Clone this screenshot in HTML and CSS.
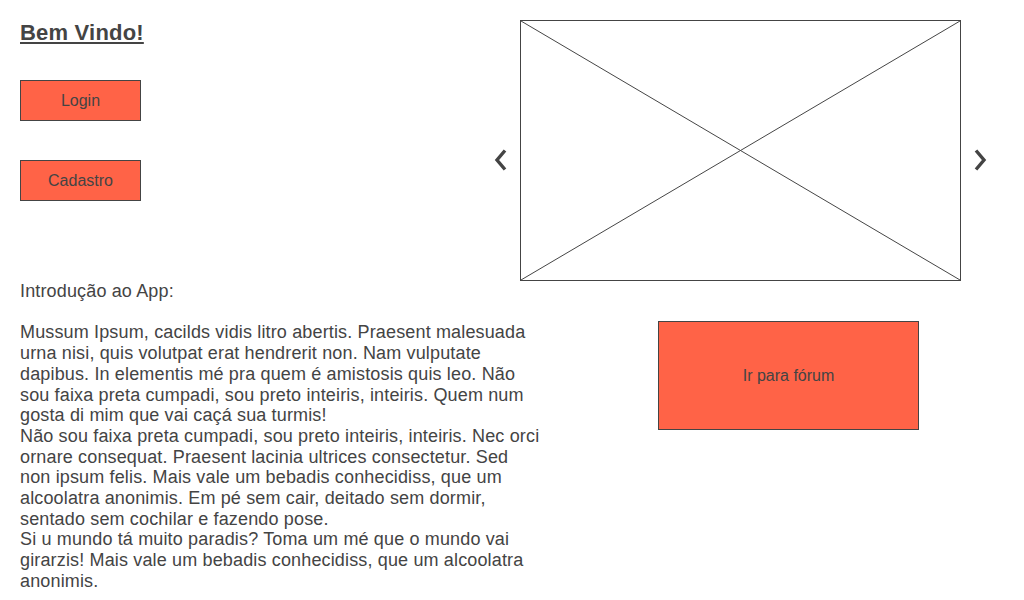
FILE: index.html
```html
<!DOCTYPE html>
<html lang="pt-BR">
<head>
<meta charset="utf-8">
<title>Bem Vindo!</title>
<link rel="stylesheet" href="styles.css">
</head>
<body>
<div class="page">
  <div class="top-row">
    <div class="welcome">
      <h1 class="title">Bem Vindo!</h1>
      <button class="btn btn-small">Login</button>
      <button class="btn btn-small">Cadastro</button>
    </div>
    <div class="carousel">
      <div class="arrow">
        <svg width="14" height="22" viewBox="0 0 14 22"><polyline points="12,1.5 4,11 12,20.5" fill="none" stroke="#444" stroke-width="3.4"/></svg>
      </div>
      <div class="placeholder">
        <svg width="100%" height="100%" viewBox="0 0 100 100" preserveAspectRatio="none"><line x1="0" y1="0" x2="100" y2="100" stroke="#444" stroke-width="1" vector-effect="non-scaling-stroke"/><line x1="100" y1="0" x2="0" y2="100" stroke="#444" stroke-width="1" vector-effect="non-scaling-stroke"/></svg>
      </div>
      <div class="arrow">
        <svg width="14" height="22" viewBox="0 0 14 22"><polyline points="2,1.5 10,11 2,20.5" fill="none" stroke="#444" stroke-width="3.4"/></svg>
      </div>
    </div>
  </div>
  <div class="bottom-row">
    <div class="intro">
      <p>Introdução ao App:</p>
      <p class="gap">Mussum Ipsum, cacilds vidis litro abertis. Praesent malesuada urna nisi, quis volutpat erat hendrerit non. Nam vulputate dapibus. In elementis mé pra quem é amistosis quis leo. Não sou faixa preta cumpadi, sou preto inteiris, inteiris. Quem num gosta di mim que vai caçá sua turmis!<br>Não sou faixa preta cumpadi, sou preto inteiris, inteiris. Nec orci ornare consequat. Praesent lacinia ultrices consectetur. Sed non ipsum felis. Mais vale um bebadis conhecidiss, que um alcoolatra anonimis. Em pé sem cair, deitado sem dormir, sentado sem cochilar e fazendo pose.<br>Si u mundo tá muito paradis? Toma um mé que o mundo vai girarzis! Mais vale um bebadis conhecidiss, que um alcoolatra anonimis.</p>
    </div>
    <div class="forum">
      <button class="btn btn-forum">Ir para fórum</button>
    </div>
  </div>
</div>
</body>
</html>
```
FILE: styles.css
```css
* { box-sizing: border-box; }
html, body { margin: 0; padding: 0; background: #fff; }
body {
  font-family: "Liberation Sans", Arial, sans-serif;
  color: #444;
}
.page {
  padding: 20px 0 0 20px;
  width: 1024px;
}
.top-row {
  display: flex;
  height: 261px;
}
.welcome {
  width: 460px;
  display: flex;
  flex-direction: column;
  align-items: flex-start;
}
.title {
  margin: 0;
  font-size: 22px;
  line-height: 25px;
  font-weight: bold;
  letter-spacing: 0.2px;
  text-decoration: underline;
  text-underline-offset: 2px;
  color: #444;
}
.btn {
  font-family: "Liberation Sans", Arial, sans-serif;
  font-size: 16px;
  color: #444;
  background: #ff6347;
  border: 1px solid #444;
  padding: 0;
  margin: 0;
  cursor: pointer;
}
.btn-small {
  width: 121px;
  height: 41px;
  margin-top: 35px;
}
.btn-small + .btn-small { margin-top: 39px; }
.carousel {
  display: flex;
  align-items: center;
}
.arrow {
  width: 40px;
  padding-top: 19px;
  display: flex;
  justify-content: center;
  align-items: center;
}
.arrow svg { display: block; }
.placeholder {
  width: 441px;
  height: 261px;
  border: 1px solid #444;
}
.placeholder svg { display: block; }
.bottom-row {
  display: flex;
}
.intro {
  width: 521px;
  font-size: 18px;
  line-height: 20.7px;
  letter-spacing: 0.15px;
}
.intro p { margin: 0; }
.intro .gap { margin-top: 20.7px; }
.forum {
  margin-left: 117px;
  padding-top: 40px;
}
.btn-forum {
  width: 261px;
  height: 109px;
}
```
